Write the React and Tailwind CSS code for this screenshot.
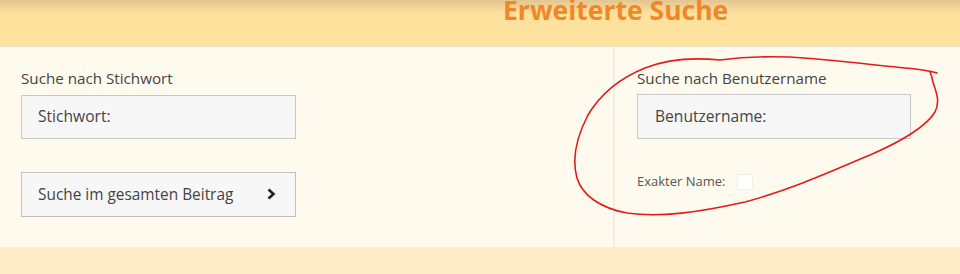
export default function App() {
  return (
    <div
      className="relative w-[960px] h-[274px] overflow-hidden bg-[#feecc8]"
      style={{ fontFamily: '"Open Sans", "Noto Sans", sans-serif' }}
    >
      <div className="h-[47px] bg-gradient-to-b from-[#e3c690] via-[#fde19d] via-30% to-[#fee29f] border-b border-[#e4e2cf] overflow-hidden">
        <h1 className="pl-[503px] -mt-[8px] text-[26.5px] leading-[36px] font-bold text-[#f2872a] whitespace-nowrap">
          Erweiterte Suche
        </h1>
      </div>

      <div className="flex h-[201px] bg-[#fffaee] border-b border-[#f8ecd4]">
        <div className="w-[615px] pl-[21px] pt-[21px] border-r-2 border-[#f1ede2]">
          <div className="text-[15.2px] leading-[20px] text-[#444]">Suche nach Stichwort</div>
          <div className="mt-[7px] w-[275px] h-[44px] bg-[#f7f7f7] border border-[#c8c8c8] flex items-center pl-[16px] text-[15.6px] text-[#444]">
            Stichwort:
          </div>
          <button className="mt-[33px] w-[275px] h-[45px] bg-[#f7f7f7] border border-[#c0c0c0] flex items-center justify-between pl-[16px] pr-[19px] text-[15.4px] text-[#444]">
            <span>Suche im gesamten Beitrag</span>
            <svg width="9" height="12" viewBox="0 0 9 12" className="-mt-[2px]">
              <path d="M1.5 1.5 L6.5 6 L1.5 10.5" fill="none" stroke="#222" strokeWidth="2.6" />
            </svg>
          </button>
        </div>

        <div className="flex-1 pl-[22px] pt-[21px]">
          <div className="text-[15.2px] leading-[20px] text-[#444]">Suche nach Benutzername</div>
          <div className="mt-[6px] w-[274px] h-[45px] bg-[#f7f7f7] border border-[#c8c8c8] flex items-center pl-[17px] text-[15.6px] text-[#444]">
            Benutzername:
          </div>
          <div className="mt-[33px] flex items-center text-[13px] text-[#555]">
            <span>Exakter Name:</span>
            <span className="ml-[12px] w-[16px] h-[16px] bg-white border border-[#eee] rounded-[2px]" />
          </div>
        </div>
      </div>

      <svg className="absolute left-0 top-0 pointer-events-none" width="960" height="274" viewBox="0 0 960 274">
        <path
          d="M937 73 C925 69 905 68 885 66 C850 62 820 59 790 57 C760 56 735 58 720 60 C700 58 670 58 645 68 C620 78 600 95 588 115 C576 138 572 160 577 178 C582 195 600 208 627 213 C660 218 700 212 745 202 C790 190 830 172 870 155 C900 142 925 128 935 112 C941 100 935 90 933 82 C932 77 931 74 930 72"
          fill="none"
          stroke="#e31b1b"
          strokeWidth="1.6"
          strokeLinecap="round"
        />
      </svg>
    </div>
  );
}
